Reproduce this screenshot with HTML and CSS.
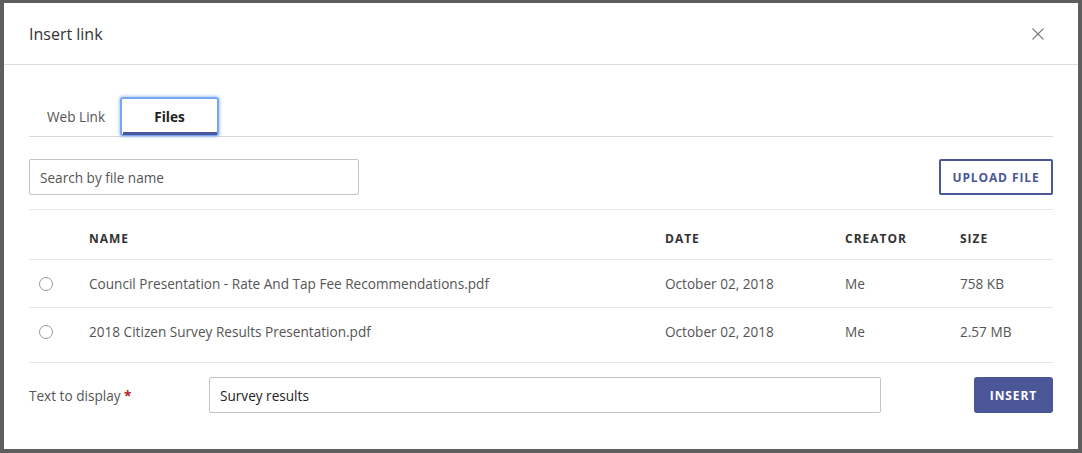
FILE: index.html
```html
<!DOCTYPE html>
<html lang="en">
<head>
<meta charset="utf-8">
<title>Insert link</title>
<link rel="stylesheet" href="styles.css">
</head>
<body>
<div class="modal">
  <header class="modal-header">
    <h1 class="modal-title">Insert link</h1>
    <button class="close" aria-label="Close">
      <svg width="12" height="12" viewBox="0 0 12 12"><path d="M0.5 0.5 L11.5 11.5 M11.5 0.5 L0.5 11.5" stroke="#7a7a7a" stroke-width="1.1" fill="none"/></svg>
    </button>
  </header>
  <div class="modal-body">
    <nav class="tabs">
      <div class="tab">Web Link</div>
      <div class="tab active">Files</div>
    </nav>
    <div class="toolbar">
      <input class="search" type="text" placeholder="Search by file name">
      <button class="btn-outline">UPLOAD FILE</button>
    </div>
    <div class="table">
      <div class="row head">
        <div></div>
        <div>NAME</div>
        <div>DATE</div>
        <div>CREATOR</div>
        <div>SIZE</div>
      </div>
      <div class="row">
        <div><span class="radio"></span></div>
        <div>Council Presentation - Rate And Tap Fee Recommendations.pdf</div>
        <div>October 02, 2018</div>
        <div>Me</div>
        <div>758 KB</div>
      </div>
      <div class="row last">
        <div><span class="radio"></span></div>
        <div>2018 Citizen Survey Results Presentation.pdf</div>
        <div>October 02, 2018</div>
        <div>Me</div>
        <div>2.57 MB</div>
      </div>
    </div>
    <div class="footer">
      <label class="label">Text to display <span class="req">*</span></label>
      <input class="display-input" type="text" value="Survey results">
      <button class="btn-primary">INSERT</button>
    </div>
  </div>
</div>
</body>
</html>
```

FILE: styles.css
```css
* { box-sizing: border-box; }
html, body { margin: 0; padding: 0; }
body {
  background: #5e5e5e;
  font-family: "Open Sans", "Liberation Sans", sans-serif;
  color: #555;
  width: 1082px;
  height: 453px;
  overflow: hidden;
  padding: 3px 4px 4px 4px;
}
.modal {
  background: #fff;
  width: 1074px;
  height: 446px;
}
.modal-header {
  height: 62px;
  border-bottom: 1px solid #dcdcdc;
  display: flex;
  align-items: center;
  justify-content: space-between;
  padding: 0 34px 0 25px;
}
.modal-title {
  margin: 0;
  font-size: 16px;
  font-weight: 400;
  color: #333;
  padding-top: 1px;
}
.close {
  border: 0;
  background: none;
  padding: 0;
  width: 12px;
  height: 12px;
  display: flex;
  cursor: pointer;
}
.modal-body {
  padding: 0 25px;
}
.tabs {
  display: flex;
  margin-top: 32px;
  border-bottom: 1px solid #d9d9d9;
  height: 40px;
}
.tab {
  font-size: 13.6px;
  color: #555;
  width: 91px;
  padding-left: 18px;
  display: flex;
  align-items: center;
  height: 39px;
}
.tab.active {
  position: relative;
  width: 99px;
  justify-content: center;
  padding: 0;
  font-weight: 700;
  color: #222;
  border-radius: 3px;
  box-shadow: inset 0 0 0 2px #78a6f7, 0 0 3px 1px rgba(120, 165, 245, 0.6);
}
.tab.active::after {
  content: "";
  position: absolute;
  left: 3px;
  right: 2px;
  bottom: 1px;
  height: 3px;
  background: #4b5698;
}
.toolbar {
  display: flex;
  justify-content: space-between;
  align-items: center;
  padding: 22px 0 14px;
  border-bottom: 1px solid #e6e6e6;
}
.search {
  width: 330px;
  height: 36px;
  border: 1px solid #c4c4c4;
  border-radius: 2px;
  padding: 0 10px;
  font-family: inherit;
  font-size: 13.6px;
  color: #555;
}
.search::placeholder { color: #555; opacity: 1; }
.btn-outline {
  width: 114px;
  height: 36px;
  border: 2px solid #4b5698;
  border-radius: 2px;
  background: #fff;
  color: #4b5698;
  font-family: inherit;
  font-weight: 700;
  font-size: 12px;
  letter-spacing: 0.9px;
  padding: 0;
}
.table {
  padding-top: 7px;
}
.row {
  display: grid;
  grid-template-columns: 60px 576px 180px 115px 1fr;
  align-items: center;
  height: 48px;
  border-bottom: 1px solid #e6e6e6;
  font-size: 13.6px;
  color: #555;
}
.row.head {
  height: 43px;
  padding-top: 1px;
  font-size: 12px;
  font-weight: 700;
  letter-spacing: 1px;
  color: #333;
}
.row.last {
  border-bottom: 0;
  height: 47px;
}
.radio {
  display: block;
  width: 14px;
  height: 14px;
  border: 1px solid #9a9a9a;
  border-radius: 50%;
  margin-left: 10px;
}
.footer {
  margin-top: 7px;
  border-top: 1px solid #e6e6e6;
  padding-top: 14px;
  display: flex;
  align-items: center;
}
.label {
  width: 180px;
  font-size: 13.6px;
  color: #555;
}
.req {
  color: #b3232a;
  font-weight: 700;
}
.display-input {
  width: 672px;
  height: 36px;
  border: 1px solid #c4c4c4;
  border-radius: 2px;
  padding: 0 10px;
  font-family: inherit;
  font-size: 13.6px;
  color: #222;
}
.btn-primary {
  margin-left: auto;
  width: 79px;
  height: 36px;
  border: 0;
  border-radius: 3px;
  background: #4b5698;
  color: #fff;
  font-family: inherit;
  font-weight: 700;
  font-size: 12px;
  letter-spacing: 0.9px;
  padding: 0;
}
```
